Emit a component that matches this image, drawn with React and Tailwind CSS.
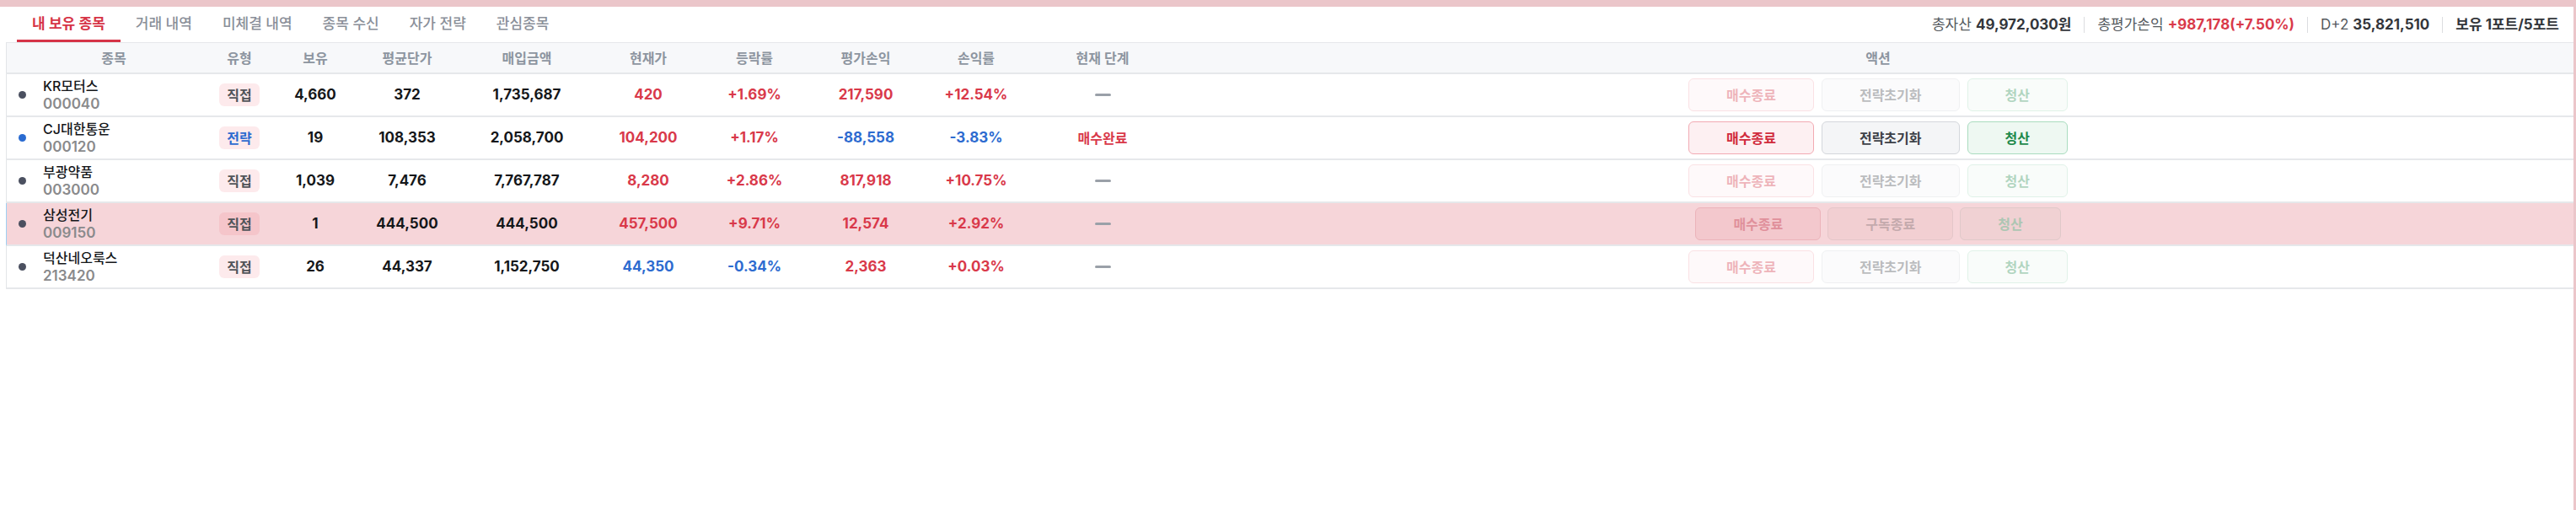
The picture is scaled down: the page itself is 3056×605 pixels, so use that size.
import React from "react";

const RED = "text-[#d9394a]";
const BLUE = "text-[#2d6bd0]";

const rows = [
  { name: "KR모터스", code: "000040", dot: "bg-[#4b5060]", type: "직접", typeColor: "text-[#505459]", qty: "4,660", avg: "372", buy: "1,735,687", cur: ["420", RED], rate: ["+1.69%", RED], pl: ["217,590", RED], plr: ["+12.54%", RED], stage: null, mode: "disabled", mid: "전략초기화" },
  { name: "CJ대한통운", code: "000120", dot: "bg-[#2a6bd1]", type: "전략", typeColor: "text-[#2d6bd0]", qty: "19", avg: "108,353", buy: "2,058,700", cur: ["104,200", RED], rate: ["+1.17%", RED], pl: ["-88,558", BLUE], plr: ["-3.83%", BLUE], stage: "매수완료", mode: "active", mid: "전략초기화" },
  { name: "부광약품", code: "003000", dot: "bg-[#4b5060]", type: "직접", typeColor: "text-[#505459]", qty: "1,039", avg: "7,476", buy: "7,767,787", cur: ["8,280", RED], rate: ["+2.86%", RED], pl: ["817,918", RED], plr: ["+10.75%", RED], stage: null, mode: "disabled", mid: "전략초기화" },
  { name: "삼성전기", code: "009150", dot: "bg-[#4b5060]", type: "직접", typeColor: "text-[#505459]", qty: "1", avg: "444,500", buy: "444,500", cur: ["457,500", RED], rate: ["+9.71%", RED], pl: ["12,574", RED], plr: ["+2.92%", RED], stage: null, mode: "hl", mid: "구독종료" },
  { name: "덕산네오룩스", code: "213420", dot: "bg-[#4b5060]", type: "직접", typeColor: "text-[#505459]", qty: "26", avg: "44,337", buy: "1,152,750", cur: ["44,350", BLUE], rate: ["-0.34%", BLUE], pl: ["2,363", RED], plr: ["+0.03%", RED], stage: null, mode: "disabled", mid: "전략초기화" },
];

const GRID = "grid grid-cols-[254px_44px_136px_82px_202px_86px_166px_98px_164px_136px_1fr]";

const tabs = ["내 보유 종목", "거래 내역", "미체결 내역", "종목 수신", "자가 전략", "관심종목"];

function Btn({ kind, mode, children }) {
  const base = "h-[39px] px-[44px] rounded-[6px] border flex items-center justify-center text-[16px] font-semibold whitespace-nowrap";
  if (mode === "hl") {
    const c =
      kind === "red"
        ? "bg-[#f3c8cd] border-[#ebb3ba] text-[#e0909b]"
        : kind === "gray"
        ? "bg-[#f2cfd2] border-[#e4c6c9] text-[#c4aaad]"
        : "bg-[#f0d1d3] border-[#dfc9c9] text-[#adc6b3]";
    return <div className={`${base} ${c}`}>{children}</div>;
  }
  const c =
    kind === "red"
      ? "bg-[#fdf0f2] border-[#f2aab3] text-[#d12c3d]"
      : kind === "gray"
      ? "bg-[#f4f5f7] border-[#d4d7dc] text-[#3d4148]"
      : "bg-[#eef8f2] border-[#a9dcbf] text-[#1f8a4c]";
  return <div className={`${base} ${c} ${mode === "disabled" ? "opacity-35" : ""}`}>{children}</div>;
}

function Cell({ children, className = "" }) {
  return <div className={`flex items-center justify-center whitespace-nowrap ${className}`}>{children}</div>;
}

export default function App() {
  return (
    <div className="w-[3056px] h-[605px] bg-white border-r-[3px] border-[#ebc6ca] font-['Inter','Noto_Sans_CJK_KR',sans-serif] text-[16px] overflow-hidden">
      <div className="h-[8px] bg-[#ebc6ca]" />
      <div className="h-[42px] flex justify-between pl-[20px] pr-[17px]">
        <div className="flex h-full">
          {tabs.map((t, i) => (
            <div
              key={t}
              className={`h-full px-[18px] pt-[3px] flex items-center border-b-[3px] text-[17px] ${
                i === 0 ? "border-[#d63447] text-[#d63447] font-semibold" : "border-transparent text-[#8a8f99] font-medium"
              }`}
            >
              {t}
            </div>
          ))}
        </div>
        <div className="flex items-center h-full pt-[1px] text-[17px]">
          <span className="text-[#555a60]">총자산</span>
          <span className="ml-[5px] font-bold text-[#33363b]">49,972,030원</span>
          <span className="mx-[15px] w-px h-[19px] bg-[#dcdde0]" />
          <span className="text-[#555a60]">총평가손익</span>
          <span className="ml-[5px] font-bold text-[#d9394a]">+987,178(+7.50%)</span>
          <span className="mx-[15px] w-px h-[19px] bg-[#dcdde0]" />
          <span className="text-[#555a60]">D+2</span>
          <span className="ml-[5px] font-bold text-[#33363b]">35,821,510</span>
          <span className="mx-[15px] w-px h-[19px] bg-[#dcdde0]" />
          <span className="font-bold text-[#33363b]">보유 1포트/5포트</span>
        </div>
      </div>

      <div className="ml-[7px]">
        <div className={`${GRID} h-[38px] bg-[#f7f8fa] border-l border-t border-b-2 border-l-[#e3e5e8] border-t-[#e6e8eb] border-b-[#e6e8eb] text-[16px] font-semibold text-[#8d95a0]`}>
          <Cell>종목</Cell>
          <Cell>유형</Cell>
          <Cell>보유</Cell>
          <Cell>평균단가</Cell>
          <Cell>매입금액</Cell>
          <Cell>현재가</Cell>
          <Cell>등락률</Cell>
          <Cell>평가손익</Cell>
          <Cell>손익률</Cell>
          <Cell>현재 단계</Cell>
          <Cell className="pl-[27px]">액션</Cell>
        </div>
        {rows.map((r) => (
          <div
            key={r.code}
            className={`${GRID} h-[51px] border-l border-b-2 border-b-[#e6e8eb] text-[17px] ${
              r.mode === "hl" ? "bg-[#f6d5d9] border-l-[#9dd0f3]" : "bg-white border-l-[#e3e5e8]"
            }`}
          >
            <div className="flex items-center pl-[14px]">
              <span className={`w-[9px] h-[9px] rounded-full ${r.dot}`} />
              <div className="ml-[20px] flex flex-col leading-[21px]">
                <span className="text-[16px] font-medium text-[#15171a]">{r.name}</span>
                <span className="text-[17px] font-semibold text-[#8a8a8c]">{r.code}</span>
              </div>
            </div>
            <Cell>
              <span className={`h-[27px] px-[9px] rounded-[6px] bg-[rgba(240,80,100,0.12)] flex items-center text-[16px] font-semibold ${r.typeColor}`}>
                {r.type}
              </span>
            </Cell>
            <Cell className="font-bold text-[#15171a]">{r.qty}</Cell>
            <Cell className="font-bold text-[#15171a]">{r.avg}</Cell>
            <Cell className="font-bold text-[#15171a]">{r.buy}</Cell>
            <Cell className={`font-bold ${r.cur[1]}`}>{r.cur[0]}</Cell>
            <Cell className={`font-bold ${r.rate[1]}`}>{r.rate[0]}</Cell>
            <Cell className={`font-bold ${r.pl[1]}`}>{r.pl[0]}</Cell>
            <Cell className={`font-bold ${r.plr[1]}`}>{r.plr[0]}</Cell>
            <Cell>
              {r.stage ? (
                <span className="text-[16px] font-bold text-[#d9394a]">{r.stage}</span>
              ) : (
                <span className="w-[19px] h-[3px] rounded-full bg-[#9aa0a8]" />
              )}
            </Cell>
            <Cell className="pl-[27px]">
              <div className={`flex ${r.mode === "hl" ? "gap-[8px]" : "gap-[9px]"}`}>
                <Btn kind="red" mode={r.mode}>매수종료</Btn>
                <Btn kind="gray" mode={r.mode}>{r.mid}</Btn>
                <Btn kind="green" mode={r.mode}>청산</Btn>
              </div>
            </Cell>
          </div>
        ))}
      </div>
    </div>
  );
}
